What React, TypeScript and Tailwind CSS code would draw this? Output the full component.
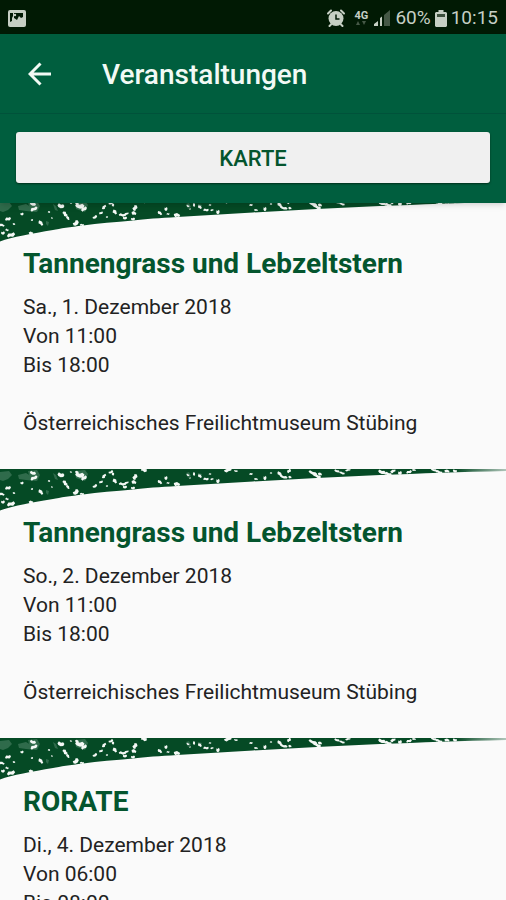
import React from 'react';

type EventItem = {
  id: number;
  title: string;
  date: string;
  from: string;
  to: string;
  place: string;
};

const events: EventItem[] = [
  {
    id: 1,
    title: 'Tannengrass und Lebzeltstern',
    date: 'Sa., 1. Dezember 2018',
    from: 'Von 11:00',
    to: 'Bis 18:00',
    place: 'Österreichisches Freilichtmuseum Stübing',
  },
  {
    id: 2,
    title: 'Tannengrass und Lebzeltstern',
    date: 'So., 2. Dezember 2018',
    from: 'Von 11:00',
    to: 'Bis 18:00',
    place: 'Österreichisches Freilichtmuseum Stübing',
  },
  {
    id: 3,
    title: 'RORATE',
    date: 'Di., 4. Dezember 2018',
    from: 'Von 06:00',
    to: 'Bis 08:00',
    place: 'Österreichisches Freilichtmuseum Stübing',
  },
];

// x, y, half width, half height, rotation
const flecks = [
  [8, 19, 3, 1.8, -10], [2, 25, 2.8, 1.5, 10], [3, 33, 2, 1.7, 0], [7, 30, 1.7, 1.2, 20],
  [14, 24, 1.3, 1, 0], [22, 14, 1.7, 1.4, 0], [11, 35, 4.2, 2.2, -15], [31, 33, 2.2, 1.6, -10],
  [33, 4, 3.2, 1.8, 20], [34, 9, 3.8, 1.9, -25], [41, 23, 3, 1.9, 40], [32, 20, 1.2, 1, 0],
  [49, 12, 1.2, 1, 0], [52, 18, 1, 0.8, 0], [61, 6, 3.6, 2.3, 20], [65, 14, 3, 1.9, 55],
  [68, 18, 2.3, 1.5, 50], [76, 23, 3.4, 2.3, -40], [82, 25, 2.2, 1.2, 10], [71, 3, 1.2, 0.8, 0],
  [80, 6, 4.8, 2.6, 10], [84, 9, 3.2, 2, -30], [77, 3, 1.8, 1.4, 0], [95, 17, 2.6, 1.5, -30],
  [101, 13, 2, 1.3, -20], [104, 7, 2.7, 1.7, -60], [111, 3, 2.6, 1.4, -20], [113, 5, 1.2, 1.8, 0],
  [115, 12, 2.6, 2, 40], [107, 17, 1.2, 0.8, 0], [122, 15, 3.3, 1.6, 10], [126, 14, 3, 1.4, -30],
  [125, 18, 2.2, 1.5, 0], [135, 8, 3, 2.2, -60], [134, 13, 2.4, 2.1, 0], [133, 19, 2.2, 1.4, 0],
  [144, 1, 3, 2, 20], [160, 13, 2.6, 1.6, 30], [166, 9, 1.6, 1.9, 0], [168, 14, 1.5, 1, 0],
  [177, 15, 3.2, 2.2, 0], [188, 6, 1.6, 1, 30], [194, 5, 1.1, 2, 0], [200, 7, 2.2, 1.6, 30],
  [190, 9, 1, 0.7, 0], [206, 10, 2.8, 1.4, 0], [212, 10, 1.7, 1, -20], [218, 12, 1.8, 2.2, 0],
  [210, 5, 1.3, 0.8, 0], [228, 1, 4, 1.8, -20], [236, 2, 2, 0.9, 15], [251, 5, 1.7, 1.1, 0],
  [256, 10, 2, 1.1, 0], [265, 9, 1.6, 2.2, 0], [271, 4, 1.2, 0.8, 0], [280, 5, 3.2, 1.8, 40],
  [284, 8, 3.9, 1.5, 15], [289, 2, 2.2, 1.7, -40], [290, 8, 1.6, 1.4, 0], [313, 4, 4.8, 1.7, 25],
  [317, 7, 4.2, 1.7, 25], [320, 5, 2, 1.8, 0], [337, 2, 2.8, 1.3, 20], [342, 4, 2.9, 1.2, 20],
  [348, 1, 2.8, 1.1, -15], [382, 3, 4, 2, 20], [388, 5, 3.8, 1.7, 15], [393, 2, 2.8, 1.7, -30],
  [400, 4, 2, 1.9, 0], [409, 3, 2.9, 1.5, -15], [414, 1, 2, 1, 0], [434, 1, 3.4, 1.3, 20],
  [439, 3, 3.6, 1.5, 20], [447, 2, 2.6, 1.6, 0], [455, 2, 2.2, 1.5, 20],
];

// rough outlines, as [x, y] shares of a fleck's half width and half height
const outlines = [
  [[-1, 0], [-0.5, -1], [0.2, -0.6], [0.8, -0.9], [1, 0.2], [0.4, 1], [-0.3, 0.6], [-0.8, 0.8]],
  [[-1, -0.5], [0, -0.9], [0.5, -0.4], [1, 0], [0.7, 0.9], [0, 0.7], [-0.5, 1], [-0.9, 0.3]],
  [[-0.8, -0.8], [-0.1, -0.5], [0.4, -1], [0.9, -0.5], [0.8, 0.5], [0.1, 1], [-0.6, 0.8], [-1, 0.2]],
];

const StatusBar: React.FC = () => (
  <div className="flex h-[34px] shrink-0 items-center bg-[#011a04] px-2 pt-0.5 text-[#c6cfc4]">
    <svg viewBox="0 0 18 17" className="h-[17px] w-[18px]" aria-hidden="true">
      <rect width="18" height="17" rx="2" fill="currentColor" />
      <path d="M2 3h3v3L4 8v3l-2 1zM6 3h9v4l-2 1-2-2-2 4-3-2z" fill="#011a04" />
      <circle cx="7" cy="5" r="1.2" fill="currentColor" />
    </svg>
    <div className="ml-auto flex items-center">
      <svg viewBox="0 0 18 18" className="h-[18px] w-[18px]" aria-hidden="true">
        <path
          d="M1 4.500 4 1.500M17 4.500 14 1.500M4 15.500 2.500 17M14 15.500l1.500 1.500"
          stroke="currentColor"
          strokeWidth="2"
          strokeLinecap="round"
        />
        <circle cx="9" cy="9.500" r="7.500" fill="currentColor" />
        <path d="M9 5.500V10h3.500" fill="none" stroke="#011a04" strokeWidth="1.500" />
      </svg>
      <div className="ml-2 flex w-4 flex-col items-center">
        <span className="text-[11px] leading-[11px] font-bold">4G</span>
        <svg viewBox="0 0 10 5" className="h-[5px] w-[10px] opacity-35" aria-hidden="true">
          <path d="M0 4h4L2 0zM6 0h4L8 4z" fill="currentColor" />
        </svg>
      </div>
      <svg viewBox="0 0 18 18" className="ml-1 h-[18px] w-[18px]" aria-hidden="true">
        <path d="M1 17v-2l4-3v5zM7 17V9l2-1.500V17z" fill="currentColor" />
        <path d="M11 17V6l6-5v16z" fill="currentColor" opacity="0.350" />
      </svg>
      <span className="ml-1 text-[19px] leading-6">60%</span>
      <svg viewBox="0 0 12 17" className="mx-1 h-[17px] w-3" aria-hidden="true">
        <path d="M3.500 0h5v2H11l1 1v13l-1 1H1l-1-1V3l1-1h2.500z" fill="currentColor" />
        <path d="M2 4h8v3H2z" fill="#011a04" opacity="0.700" />
      </svg>
      <span className="text-[19px] leading-6">10:15</span>
    </div>
  </div>
);

const Banner: React.FC = () => (
  <svg viewBox="0 0 506 42" preserveAspectRatio="none" className="block h-[42px] w-full" aria-hidden="true">
    <defs>
      <linearGradient id="tip" x1="0" x2="1">
        <stop offset="0" stopColor="#fafafa" stopOpacity="0" />
        <stop offset="1" stopColor="#fafafa" stopOpacity="0.700" />
      </linearGradient>
    </defs>
    <path
      d="M0 0H506V2C460 3 420 4.500 380 6C337 8 295 10 253 12.500L177 17C160 18 145 19 133 20.500C115 22 98 23.500 83 25.500C70 27 60 28.500 53 30C32 33.500 12 37 0 41.500Z"
      fill="#054a25"
    />
    <g fill="#7fa893" opacity="0.350">
      <path d="M0 3 9 2 12 6 8 10 3 12 0 11zM18 6l8-2 5 3 6 1-1 4-10-1-7-1zM53 4l3 2 2 5-3-1zM46 21l3 1-1 4-2-2z" />
      <path d="M28 2l9-1 3 5-3 6-7-2zM75 2l10-1 3 4-3 7-9-3zM186 4l3-1 2 4-3 2zM198 4l4 1-1 4-3-1z" />
    </g>
    <g fill="#f4f8f5">
      {flecks.map(([x, y, w, h, r], i) => (
        <polygon
          key={`${x}-${y}`}
          points={outlines[i % outlines.length].map(([px, py]) => `${px * w},${py * h}`).join(' ')}
          transform={`translate(${x} ${y}) rotate(${r})`}
        />
      ))}
    </g>
    <path d="M456 0H506V4H456Z" fill="url(#tip)" />
  </svg>
);

const EventCard: React.FC<{ event: EventItem }> = ({ event }) => (
  <article className="h-[269px]">
    <Banner />
    <div className="px-[23px] text-[21px] leading-[29px] text-[#222222]">
      <h2 className="mb-[11px] pt-1 text-[28px] leading-9 font-bold text-[#04552e]">{event.title}</h2>
      <p>{event.date}</p>
      <p>{event.from}</p>
      <p>{event.to}</p>
      <p className="mt-[29px]">{event.place}</p>
    </div>
  </article>
);

export default function App() {
  return (
    <div className="flex h-screen flex-col overflow-hidden bg-[#fafafa] font-[Roboto,sans-serif]">
      <StatusBar />
      <header className="relative z-10 shrink-0 bg-[#005e3e] shadow-md">
        <div className="flex h-20 items-center border-b border-[#00523a] px-6">
          <button type="button" aria-label="Zurück" className="flex h-8 w-8 items-center justify-center text-[#f2faf5]">
            <svg viewBox="0 0 24 24" className="h-6 w-6" aria-hidden="true">
              <path d="M23 12H2M12.500 1.500 2 12l10.500 10.500" fill="none" stroke="currentColor" strokeWidth="3" />
            </svg>
          </button>
          <h1 className="ml-[46px] pt-0.5 text-[28px] leading-8 font-medium text-[#f2faf5]">Veranstaltungen</h1>
        </div>
        <div className="px-4 pt-[18px] pb-5">
          <button
            type="button"
            className="h-[51px] w-full rounded-[3px] bg-[#f0f0f0] pt-0.5 text-[22px] font-medium text-[#04552e] shadow-[0_1px_2px_#00301c]"
          >
            KARTE
          </button>
        </div>
      </header>
      <main className="-mt-[3px] min-h-0 flex-1 overflow-y-auto [scrollbar-width:none]">
        {events.map((event) => (
          <EventCard key={event.id} event={event} />
        ))}
      </main>
    </div>
  );
}
